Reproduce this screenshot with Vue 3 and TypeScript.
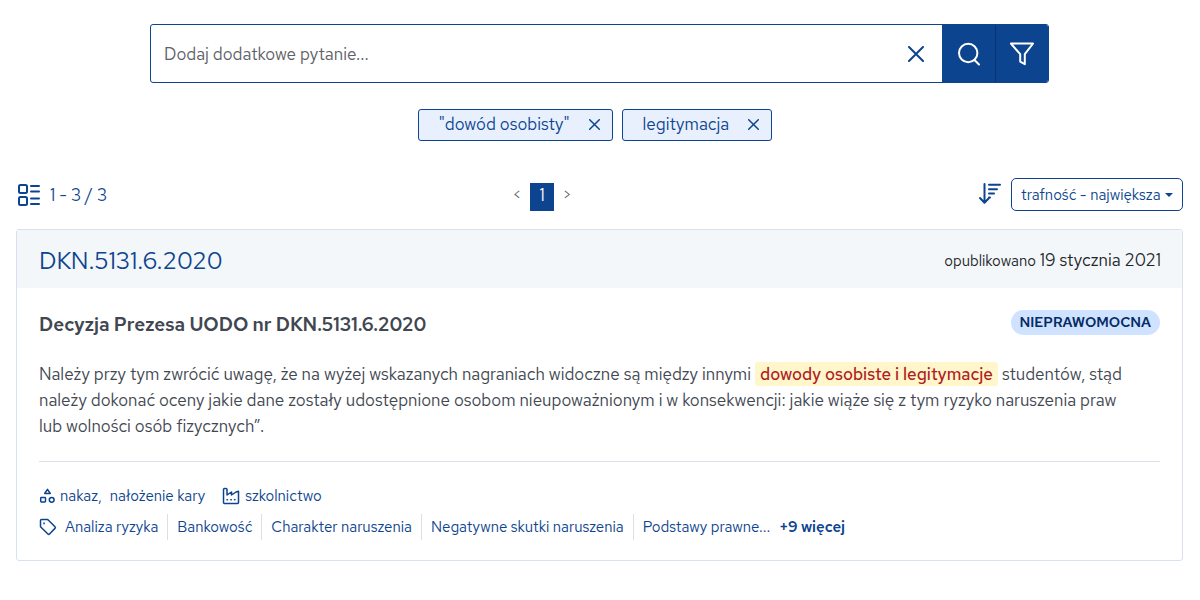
<script setup lang="ts">
import { ref } from 'vue'

const query = ref('')
const sort = ref('relevance')
const filters = ref<string[]>(['"dowód osobisty"', 'legitymacja'])
const keywords: string[] = [
  'Analiza ryzyka',
  'Bankowość',
  'Charakter naruszenia',
  'Negatywne skutki naruszenia',
  'Podstawy prawne...',
]

function removeFilter(name: string): void {
  filters.value = filters.value.filter((item) => item !== name)
}
</script>

<template>
  <main class="page">
    <form class="search" role="search" @submit.prevent>
      <div class="field">
        <input v-model="query" type="text" aria-label="Dodatkowe pytanie" placeholder="Dodaj dodatkowe pytanie..." />
        <button class="clear" type="button" aria-label="Wyczyść" @click="query = ''">
          <svg width="16" height="16" viewBox="0 0 16 16"><path d="M1 1l14 14M15 1L1 15" /></svg>
        </button>
      </div>
      <button class="action" type="submit" aria-label="Szukaj">
        <svg width="24" height="24" viewBox="0 0 24 24"><circle cx="11.2" cy="11" r="9.2" /><path d="M18 18.500l4 4" /></svg>
      </button>
      <button class="action" type="button" aria-label="Filtry">
        <svg width="24" height="24" viewBox="0 0 24 24"><path d="M.9 1.500h22.2l-8.300 10.700v10l-4.600-2.600v-7.400z" /></svg>
      </button>
    </form>

    <div class="chips">
      <span v-for="name in filters" :key="name" class="chip">
        {{ name }}
        <button type="button" :aria-label="'Usuń ' + name" @click="removeFilter(name)">
          <svg width="11" height="11" viewBox="0 0 11 11"><path d="M.7.7l9.600 9.600M10.300.7L.7 10.300" /></svg>
        </button>
      </span>
    </div>

    <div class="toolbar">
      <div class="count">
        <svg width="24" height="24" viewBox="0 0 24 24">
          <rect x="2" y="2" width="8" height="8" rx="1.500" />
          <rect x="2" y="14" width="8" height="8" rx="1.500" />
          <path d="M14 3h8M14 8.500h8M14 15.500h8M14 21h8" />
        </svg>
        <span>1 - 3 / 3</span>
      </div>
      <nav class="pager" aria-label="Strony">
        <button type="button" aria-label="Poprzednia strona">&lt;</button>
        <button type="button" class="current" aria-current="page">1</button>
        <button type="button" aria-label="Następna strona">&gt;</button>
      </nav>
      <div class="sorting">
        <svg width="24" height="24" viewBox="0 0 24 24">
          <path d="M6.500 1v18.500M2 15l4.500 4.700L11 15M11 1.800h11M11 6.200h8M11 10.600h5M11 14.500h1" />
        </svg>
        <div class="select">
          <select v-model="sort" aria-label="Sortowanie">
            <option value="relevance">trafność - największa</option>
          </select>
          <i class="caret"></i>
        </div>
      </div>
    </div>

    <article class="card">
      <header>
        <h2><a href="#">DKN.5131.6.2020</a></h2>
        <p class="date"><span>opublikowano</span> 19 stycznia 2021</p>
      </header>
      <div class="body">
        <div class="title">
          <h3>Decyzja Prezesa UODO nr DKN.5131.6.2020</h3>
          <span class="badge">NIEPRAWOMOCNA</span>
        </div>
        <p class="excerpt">
          Należy przy tym zwrócić uwagę, że na wyżej wskazanych nagraniach widoczne są między innymi
          <mark>dowody osobiste i legitymacje</mark> studentów, stąd należy dokonać oceny jakie dane zostały udostępnione osobom
          nieupoważnionym i w konsekwencji: jakie wiąże się z tym ryzyko naruszenia praw lub wolności osób fizycznych”.
        </p>
        <div class="meta">
          <div class="row">
            <svg width="16" height="16" viewBox="0 0 16 16">
              <path d="M8.500 1.300l2.800 4.200H5.700z" />
              <rect x="1.700" y="9.500" width="4.800" height="4.500" rx=".7" />
              <circle cx="12.700" cy="11.800" r="2.400" />
            </svg>
            <a href="#">nakaz,</a>
            <a href="#" class="penalty">nałożenie kary</a>
            <svg width="18" height="18" viewBox="0 0 18 18">
              <path d="M1.500 15.500V2.500q0-1 1-1h1.500q1 0 1 1V8l4.500-3v3L14 5l2.500-.7v11.200q0 1-1 1h-13q-1 0-1-1z" />
              <path d="M5 12.800h.5M8.800 12.800h.5M12.500 12.800h.5" />
            </svg>
            <a href="#">szkolnictwo</a>
          </div>
          <div class="row tags">
            <svg width="18" height="18" viewBox="0 0 18 18">
              <path d="M1.500 2.500q0-1 1-1h6.200L16 8.800q.8.800 0 1.600L10.500 16q-.8.800-1.600 0L1.500 8.700z" />
              <path d="M5 5v.8" />
            </svg>
            <ul>
              <li v-for="word in keywords" :key="word"><a href="#">{{ word }}</a></li>
            </ul>
            <button type="button" class="more">+9 więcej</button>
          </div>
        </div>
      </div>
    </article>
  </main>
</template>

<style>
body {
  margin: 0;
  background: #fff;
}
</style>

<style scoped>
* {
  box-sizing: border-box;
}
.page {
  padding: 24px 17px 39px 16px;
  color: #0d448f;
  font-family: "Red Hat Text", Lato, "Noto Sans", sans-serif;
  font-size: 17px;
}
h2, h3, p, ul {
  margin: 0;
  padding: 0;
  font-weight: 400;
}
button, input, select {
  font: inherit;
  color: inherit;
  margin: 0;
  padding: 0;
  border: 0;
  background: none;
}
button {
  cursor: pointer;
}
a {
  color: inherit;
  text-decoration: none;
}
svg {
  display: block;
  flex: none;
  fill: none;
  stroke: currentColor;
  stroke-width: 2;
  stroke-linecap: round;
  stroke-linejoin: round;
}
.search {
  display: flex;
  max-width: 899px;
  height: 59px;
  margin: 0 auto;
  border: 1px solid #0d448f;
  border-radius: 3px;
  overflow: hidden;
}
.field {
  display: flex;
  flex: 1;
  align-items: center;
}
.field input {
  flex: 1;
  min-width: 0;
  height: 100%;
  padding: 0 13px;
  outline: 0;
}
.field input::placeholder {
  color: #5d6066;
  opacity: 1;
}
.clear {
  padding: 18px;
}
.action {
  display: grid;
  place-items: center;
  width: 53px;
  background: #0d448f;
  color: #fff;
}
.action + .action {
  border-left: 1px solid #08336f;
}
.chips {
  display: flex;
  justify-content: center;
  gap: 9px;
  margin: 26px 9px 0 0;
}
.chip {
  display: flex;
  align-items: center;
  gap: 19px;
  height: 32px;
  padding: 0 12px 2px 20px;
  border: 1px solid #0d448f;
  border-radius: 3px;
  background: #e8f0fe;
}
.chip svg {
  stroke-width: 1.5;
}
.toolbar {
  display: grid;
  grid-template-columns: 1fr auto 1fr;
  align-items: center;
  height: 33px;
  margin-top: 37px;
}
.count, .sorting {
  display: flex;
  align-items: center;
  gap: 9px;
}
.count {
  padding-left: 1px;
}
.sorting {
  justify-content: flex-end;
}
.pager {
  display: flex;
  align-items: center;
  margin: 4px 115px 0 0;
}
.pager button {
  width: 26px;
  height: 28px;
  padding-bottom: 3px;
  color: #5d6066;
  font-size: 15px;
}
.pager .current {
  width: 24px;
  background: #0d448f;
  color: #fff;
  font-size: 17px;
}
.select {
  display: grid;
  align-items: center;
}
.select select, .caret {
  grid-area: 1 / 1;
}
.select select {
  appearance: none;
  height: 33px;
  width: 172px;
  padding: 0 19px 0 9px;
  border: 1px solid #0d448f;
  border-radius: 5px;
  font-size: 15px;
}
.caret {
  justify-self: end;
  margin-right: 10px;
  border: 4px solid transparent;
  border-top-color: #0d448f;
  border-bottom: 0;
  pointer-events: none;
}
.card {
  margin-top: 18px;
  border: 1px solid #d9e0ee;
  border-radius: 3px;
}
.card header {
  display: flex;
  align-items: center;
  justify-content: space-between;
  height: 58px;
  padding: 2px 21px 0 22px;
  background: #f4f7f9;
}
h2 {
  font-size: 24px;
}
.date {
  color: #212529;
}
.date span {
  font-size: 15px;
}
.body {
  padding: 22px 22px 18px;
}
.title {
  display: flex;
  justify-content: space-between;
  align-items: flex-start;
}
h3 {
  color: #414751;
  font-size: 19px;
  font-weight: 600;
  line-height: 30px;
}
.badge {
  padding: 0 9px;
  border-radius: 13px;
  background: #cfe2ff;
  color: #052c65;
  font-size: 14px;
  font-weight: 600;
  line-height: 25px;
}
.excerpt {
  margin-top: 21px;
  padding-right: 20px;
  color: #414751;
  line-height: 26px;
}
mark {
  padding: 1px 5px;
  border-radius: 3px;
  background: #fff6cc;
  color: #b02020;
  font-weight: 500;
}
.meta {
  margin-top: 22px;
  padding-top: 18px;
  border-top: 1px solid #dbe1e9;
  font-size: 15px;
}
.row {
  display: flex;
  align-items: center;
  height: 31px;
}
.row svg {
  stroke-width: 1.5;
  margin-right: 5px;
}
.penalty {
  margin: 0 17px 0 8px;
}
.tags svg {
  margin-right: 8px;
}
ul {
  display: flex;
  list-style: none;
}
li {
  padding-right: 9px;
  line-height: 26px;
}
li + li {
  padding-left: 9px;
  border-left: 1px solid #dcdfe4;
}
.more {
  font-weight: 600;
}
</style>
